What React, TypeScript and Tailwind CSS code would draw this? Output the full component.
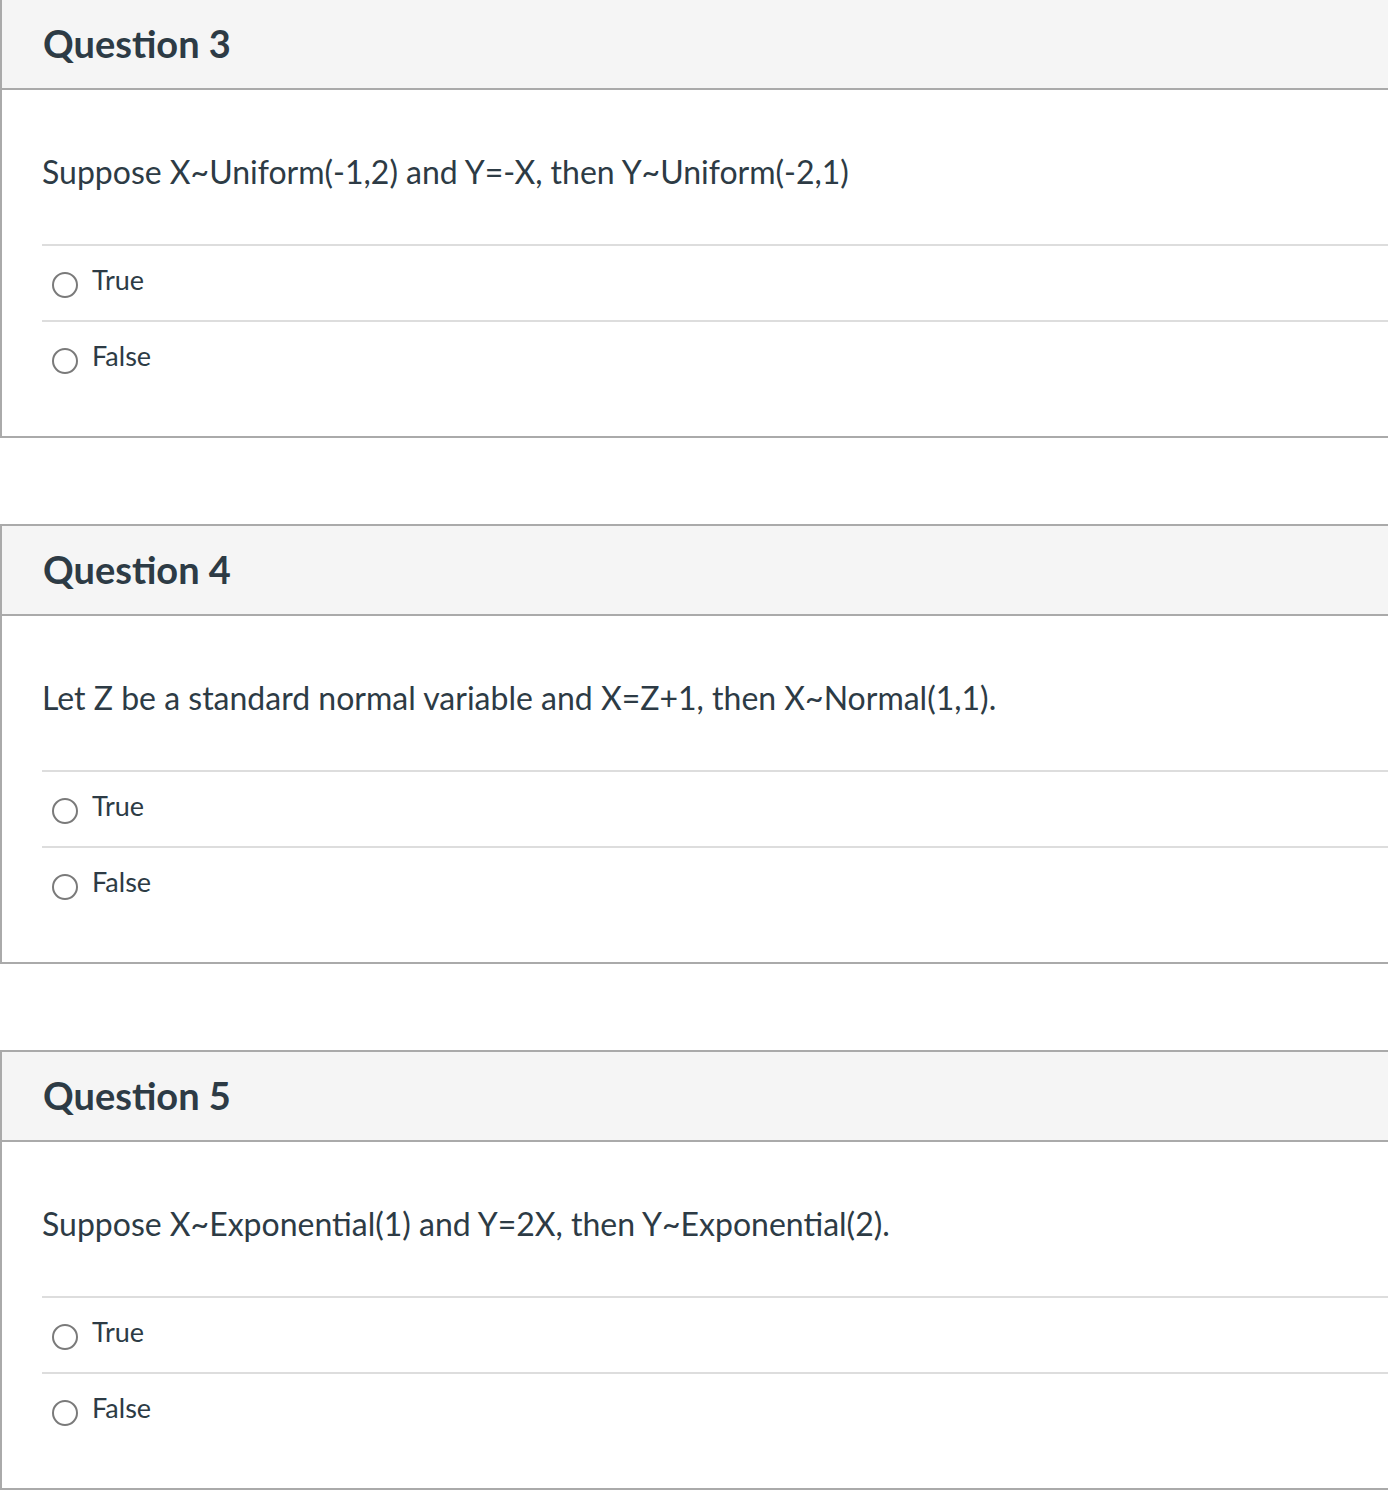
import React from "react";

const questions = [
  { n: 3, text: "Suppose X~Uniform(-1,2) and Y=-X, then Y~Uniform(-2,1)" },
  { n: 4, text: "Let Z be a standard normal variable and X=Z+1, then X~Normal(1,1)." },
  { n: 5, text: "Suppose X~Exponential(1) and Y=2X, then Y~Exponential(2)." },
];

function Option({ label }: { label: string }) {
  return (
    <div className="border-t-2 border-[#dddddd] h-[76px] flex items-center pl-[10px]">
      <div className="w-[26px] h-[26px] rounded-full border-2 border-[#7a7a7a] bg-white mt-[3px]" />
      <span className="ml-[14px] text-[27px] leading-[40px] text-[#2d3b45] mt-[-6px]">{label}</span>
    </div>
  );
}

function Question({ n, text }: { n: number; text: string }) {
  return (
    <div className="border-l-2 border-t-2 border-b-2 border-[#aaaaaa] bg-white">
      <div className="bg-[#f5f5f5] border-b-2 border-[#aaaaaa] h-[90px] flex items-center pl-[41px]">
        <h2 className="text-[38px] font-bold leading-[46px] text-[#2d3b45] mt-[-3px]">Question {n}</h2>
      </div>
      <div className="pl-[40px]">
        <div className="pt-[60px] pb-[50px] text-[32px] leading-[44px] text-[#2d3b45]">{text}</div>
        <Option label="True" />
        <Option label="False" />
        <div className="h-[40px]" />
      </div>
    </div>
  );
}

export default function App() {
  return (
    <div
      className="bg-white min-h-[1496px] pb-[6px] overflow-hidden"
      style={{ fontFamily: "Lato, 'Open Sans', sans-serif" }}
    >
      <div className="mt-[-2px] flex flex-col gap-[86px]">
        {questions.map((q) => (
          <Question key={q.n} n={q.n} text={q.text} />
        ))}
      </div>
    </div>
  );
}
